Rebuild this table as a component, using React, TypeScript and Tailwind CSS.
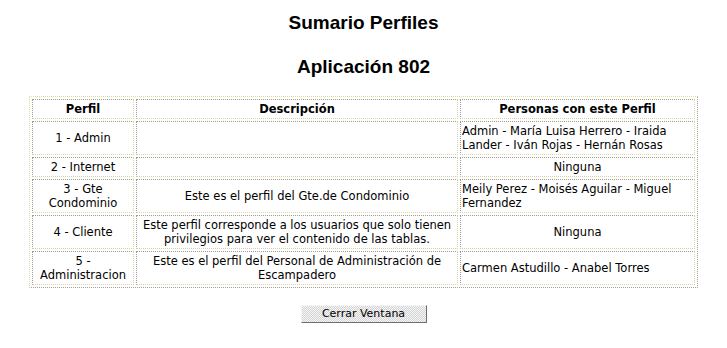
const rows: { perfil: string[]; desc: string[]; personas: string[]; personasCenter?: boolean }[] = [
  { perfil: ['1 - Admin'], desc: [], personas: ['Admin - María Luisa Herrero - Iraida', 'Lander - Iván Rojas - Hernán Rosas'] },
  { perfil: ['2 - Internet'], desc: [], personas: ['Ninguna'], personasCenter: true },
  { perfil: ['3 - Gte', 'Condominio'], desc: ['Este es el perfil del Gte.de Condominio'], personas: ['Meily Perez - Moisés Aguilar - Miguel', 'Fernandez'] },
  {
    perfil: ['4 - Cliente'],
    desc: ['Este perfil corresponde a los usuarios que solo tienen', 'privilegios para ver el contenido de las tablas.'],
    personas: ['Ninguna'],
    personasCenter: true,
  },
  {
    perfil: ['5 -', 'Administracion'],
    desc: ['Este es el perfil del Personal de Administración de', 'Escampadero'],
    personas: ['Carmen Astudillo - Anabel Torres'],
  },
];

const cell =
  'border border-dotted border-t-[#9c9c9c] border-l-[#9c9c9c] border-b-[#d8d49c] border-r-[#d8d49c] px-[1px] py-[2px] align-middle whitespace-nowrap';

function Lines({ lines }: { lines: string[] }) {
  return (
    <>
      {lines.map((l, i) => (
        <div key={i}>{l}</div>
      ))}
    </>
  );
}

export default function App() {
  return (
    <div className="w-[727px] h-[348px] bg-white text-black">
      <div className="pt-[12px] text-center font-['Liberation_Sans',Arial,sans-serif] font-bold text-[19px] leading-[22px]">
        <div>Sumario Perfiles</div>
        <div className="mt-[22px]">Aplicación 802</div>
      </div>

      <table className="mt-[18px] mx-auto w-[669px] table-fixed border-separate border-spacing-[2px] border border-dotted border-t-[#e4dc90] border-l-[#e4dc90] border-b-[#a8a0a0] border-r-[#a8a0a0] font-['DejaVu_Sans',Verdana,sans-serif] text-[11.5px] leading-[14px]">
        <thead>
          <tr>
            <th className={`${cell} w-[102px] text-center font-bold`}>Perfil</th>
            <th className={`${cell} w-[322px] text-center font-bold`}>Descripción</th>
            <th className={`${cell} text-center font-bold`}>Personas con este Perfil</th>
          </tr>
        </thead>
        <tbody>
          {rows.map((r, i) => (
            <tr key={i}>
              <td className={`${cell} text-center`}>
                <Lines lines={r.perfil} />
              </td>
              <td className={`${cell} text-center`}>
                <Lines lines={r.desc} />
              </td>
              <td className={`${cell} ${r.personasCenter ? 'text-center' : 'text-left'}`}>
                <Lines lines={r.personas} />
              </td>
            </tr>
          ))}
        </tbody>
      </table>

      <div className="mt-[17px] flex justify-center">
        <button
          type="button"
          className="w-[126px] h-[18px] border-[1px] border-solid border-t-[#f4f4f4] border-l-[#f4f4f4] border-b-[#6e6e6e] border-r-[#6e6e6e] bg-[repeating-conic-gradient(#d4d4d4_0_25%,#f6f6f6_0_50%)] bg-[length:2px_2px] font-['DejaVu_Sans',Verdana,sans-serif] text-[11px] leading-[16px] text-black"
        >
          Cerrar Ventana
        </button>
      </div>
    </div>
  );
}
